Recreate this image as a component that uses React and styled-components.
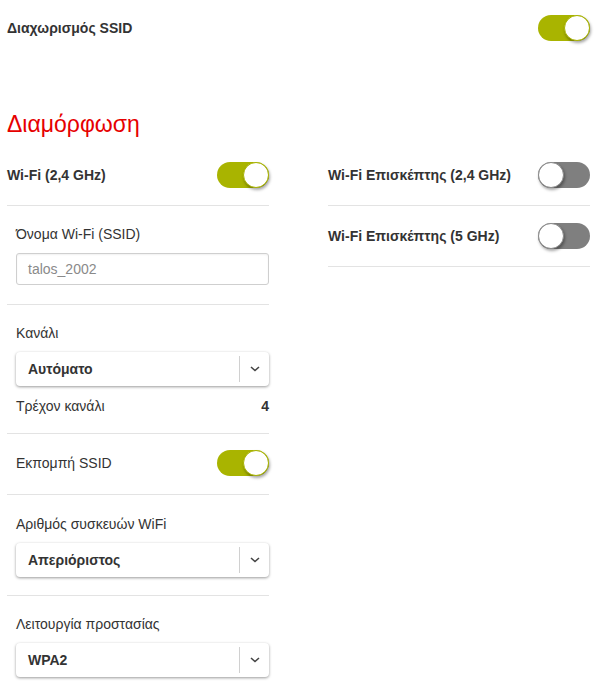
import React from "react";
import styled, { createGlobalStyle } from "styled-components";

const Global = createGlobalStyle`
  html, body { margin: 0; padding: 0; background: #fff; }
  body { font-family: "Liberation Sans", Arial, sans-serif; color: #333; }
  * { box-sizing: border-box; }
`;

const Page = styled.div`
  width: 598px;
  padding: 0 8px 0 7px;
`;

const TopRow = styled.div`
  display: flex;
  align-items: center;
  justify-content: space-between;
  height: 54px;
  padding-top: 1px;
`;

const BoldLabel = styled.span`
  font-size: 14px;
  font-weight: bold;
  color: #333;
  line-height: 16px;
`;

const Title = styled.h2`
  margin: 57px 0 8px;
  font-size: 23px;
  line-height: 26px;
  font-weight: normal;
  color: #e60000;
`;

const Columns = styled.div`
  display: grid;
  grid-template-columns: 262px 262px;
  column-gap: 59px;
  align-items: start;
`;

const Column = styled.div`
  display: flex;
  flex-direction: column;
`;

const ToggleRow = styled.div`
  display: flex;
  align-items: center;
  justify-content: space-between;
  height: 61px;
  padding-bottom: 1px;
  border-bottom: 1px solid #e3e3e3;
`;

const Track = styled.div`
  position: relative;
  width: 52px;
  height: 26px;
  border-radius: 13px;
  background: ${(p) => (p.$on ? "#a9b400" : "#7f7f7f")};
  flex-shrink: 0;
`;

const Knob = styled.div`
  position: absolute;
  top: 0;
  ${(p) => (p.$on ? "right: 0;" : "left: 0;")}
  width: 26px;
  height: 26px;
  border-radius: 50%;
  background: #fff;
  border: 1px solid ${(p) => (p.$on ? "#a9b400" : "#8a8a8a")};
  box-shadow: 1px 2px 3px rgba(0, 0, 0, 0.35);
`;

const Toggle = ({ on }) => (
  <Track $on={on}>
    <Knob $on={on} />
  </Track>
);

const Section = styled.div`
  display: flex;
  flex-direction: column;
  padding: ${(p) => p.$pad || "20px 0 18px 9px"};
  border-bottom: ${(p) => (p.$last ? "none" : "1px solid #e3e3e3")};
`;

const InlineSection = styled(Section)`
  flex-direction: row;
  align-items: center;
  justify-content: space-between;
`;

const Label = styled.div`
  font-size: 14px;
  line-height: 16px;
  color: #333;
`;

const Input = styled.div`
  margin-top: 11px;
  height: 32px;
  border: 1px solid #cfcfcf;
  border-radius: 3px;
  box-shadow: inset 0 1px 2px rgba(0, 0, 0, 0.06);
  display: flex;
  align-items: center;
  padding-left: 11px;
  font-size: 14px;
  color: #8a8a8a;
`;

const Select = styled.div`
  margin-top: 11px;
  height: 34px;
  border-radius: 4px;
  background: #fff;
  box-shadow: 0 1px 3px rgba(0, 0, 0, 0.4);
  display: flex;
  align-items: center;
`;

const SelectValue = styled.div`
  flex: 1;
  padding-left: 12px;
  font-size: 14px;
  font-weight: bold;
  color: #333;
`;

const Caret = styled.div`
  width: 30px;
  height: 26px;
  border-left: 1px solid #d0d0d0;
  display: flex;
  align-items: center;
  justify-content: center;
`;

const Dropdown = ({ value }) => (
  <Select>
    <SelectValue>{value}</SelectValue>
    <Caret>
      <svg width="10" height="6" viewBox="0 0 10 6">
        <path d="M1 1 L5 4.5 L9 1" fill="none" stroke="#444" strokeWidth="1.6" />
      </svg>
    </Caret>
  </Select>
);

const InfoRow = styled.div`
  margin-top: 12px;
  display: flex;
  justify-content: space-between;
  font-size: 14px;
  line-height: 16px;
  color: #333;
`;

const InfoValue = styled.span`
  font-weight: bold;
`;

export default function App() {
  return (
    <Page>
      <Global />
      <TopRow>
        <BoldLabel>Διαχωρισμός SSID</BoldLabel>
        <Toggle on />
      </TopRow>
      <Title>Διαμόρφωση</Title>
      <Columns>
        <Column>
          <ToggleRow>
            <BoldLabel>Wi-Fi (2,4 GHz)</BoldLabel>
            <Toggle on />
          </ToggleRow>
          <Section $pad="20px 0 19px 9px">
            <Label>Όνομα Wi-Fi (SSID)</Label>
            <Input>talos_2002</Input>
          </Section>
          <Section $pad="20px 0 19px 9px">
            <Label>Κανάλι</Label>
            <Dropdown value="Αυτόματο" />
            <InfoRow>
              <span>Τρέχον κανάλι</span>
              <InfoValue>4</InfoValue>
            </InfoRow>
          </Section>
          <InlineSection $pad="16px 0 18px 9px">
            <Label>Εκπομπή SSID</Label>
            <Toggle on />
          </InlineSection>
          <Section $pad="21px 0 18px 9px">
            <Label>Αριθμός συσκευών WiFi</Label>
            <Dropdown value="Απεριόριστος" />
          </Section>
          <Section $last $pad="20px 0 10px 9px">
            <Label>Λειτουργία προστασίας</Label>
            <Dropdown value="WPA2" />
          </Section>
        </Column>
        <Column>
          <ToggleRow>
            <BoldLabel>Wi-Fi Επισκέπτης (2,4 GHz)</BoldLabel>
            <Toggle />
          </ToggleRow>
          <ToggleRow>
            <BoldLabel>Wi-Fi Επισκέπτης (5 GHz)</BoldLabel>
            <Toggle />
          </ToggleRow>
        </Column>
      </Columns>
    </Page>
  );
}
